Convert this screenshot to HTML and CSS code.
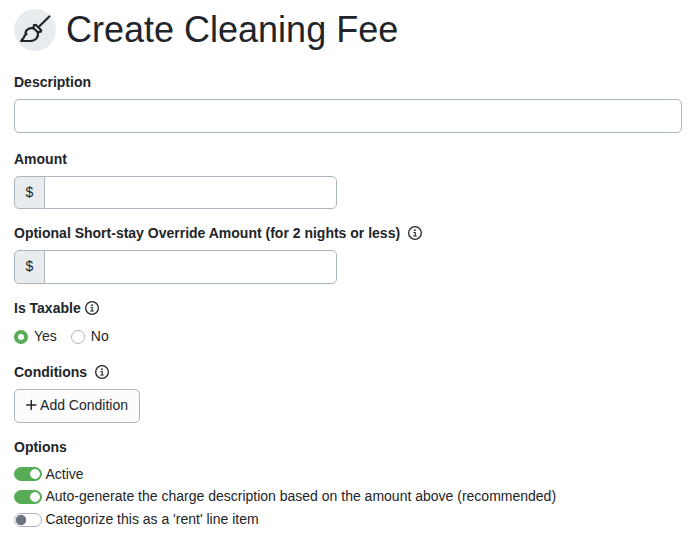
FILE: index.html
```html
<!DOCTYPE html>
<html lang="en">
<head>
    <meta charset="UTF-8">
    <meta name="viewport" content="width=device-width, initial-scale=1.0">
    <title>Create Cleaning Fee</title>
    <link rel="stylesheet" href="styles.css">
</head>
<body>
    <!-- Shared info icon -->
    <svg class="sprite" width="0" height="0">
        <symbol id="info" viewBox="0 0 14 14">
            <circle cx="7" cy="7" r="6.35" fill="none" stroke="currentColor" stroke-width="1.3"/>
            <circle cx="7" cy="4.2" r="0.9" fill="currentColor"/>
            <path d="M5.5 6.5H7.2V9.9M5.2 10H8.8" fill="none" stroke="currentColor" stroke-width="1.1"/>
        </symbol>
    </svg>

    <form class="container">
        <header class="header">
            <span class="header-icon">
                <svg viewBox="0 0 42 42" width="42" height="42" fill="none" stroke="currentColor" stroke-width="2.2" stroke-linecap="round" stroke-linejoin="round">
                    <path d="M35.3 7.5L25.6 17"/>
                    <path d="M20 16L22 15.9L27.2 21.2L26.8 22.6L23.8 23.2L19.4 19Z"/>
                    <path d="M19.4 19.4C15.8 18.6 12 20.4 11.4 23.6L12.6 25L10.8 26.2C10.6 28.8 8.6 29.6 7.2 32H16.2C21.6 32 25 28 23.8 23.2"/>
                </svg>
            </span>
            <h1>Create Cleaning Fee</h1>
        </header>

        <div class="field">
            <label class="title" for="description">Description</label>
            <input class="input" type="text" id="description">
        </div>

        <div class="field amount">
            <label class="title" for="amount">Amount</label>
            <div class="input-group">
                <span class="prefix">$</span>
                <input class="input" type="text" id="amount">
            </div>
        </div>

        <div class="field override">
            <label class="title" for="override">Optional Short-stay Override Amount (for 2 nights or less) <svg class="info wide"><use href="#info"/></svg></label>
            <div class="input-group">
                <span class="prefix">$</span>
                <input class="input" type="text" id="override">
            </div>
        </div>

        <div class="field taxable">
            <div class="title">Is Taxable <svg class="info"><use href="#info"/></svg></div>
            <div class="radios">
                <label><input type="radio" name="taxable" checked>Yes</label>
                <label><input type="radio" name="taxable">No</label>
            </div>
        </div>

        <div class="field conditions">
            <div class="title">Conditions <svg class="info wide"><use href="#info"/></svg></div>
            <button type="button" class="btn">
                <svg viewBox="0 0 12 12" width="12" height="12"><path d="M6 0.8V11.2M0.8 6H11.2" stroke="currentColor" stroke-width="1.6" stroke-linecap="round"/></svg>
                <span>Add Condition</span>
            </button>
        </div>

        <div class="field options">
            <div class="title">Options</div>
            <label class="switch active"><input type="checkbox" checked><span>Active</span></label>
            <label class="switch"><input type="checkbox" checked><span>Auto-generate the charge description based on the amount above (recommended)</span></label>
            <label class="switch"><input type="checkbox"><span>Categorize this as a 'rent' line item</span></label>
        </div>
    </form>
</body>
</html>
```

FILE: styles.css
```css
* {
    margin: 0;
    padding: 0;
    box-sizing: border-box;
}

body {
    background-color: #fff;
    color: #212529;
    font-family: "Liberation Sans", Arial, sans-serif;
    font-size: 14px;
    line-height: 21px;
}

.sprite {
    position: absolute;
}

.container {
    padding: 9px 14px 0;
}

.header {
    display: flex;
    align-items: center;
    gap: 10px;
    height: 42px;
    margin-bottom: 21px;
}

.header h1 {
    font-size: 36px;
    font-weight: 400;
    line-height: 42px;
}

.header-icon {
    width: 42px;
    height: 42px;
    border-radius: 50%;
    background-color: #e9ecef;
}

.header-icon svg {
    display: block;
}

.field {
    margin-bottom: 16px;
}

.amount,
.override,
.conditions {
    margin-bottom: 14px;
}

.taxable {
    margin-bottom: 15px;
}

.title {
    display: flex;
    align-items: center;
    height: 21px;
    margin-bottom: 6px;
    font-weight: bold;
}

.taxable .title {
    margin-bottom: 7px;
}

.options .title {
    margin-bottom: 5px;
}

.info {
    width: 14px;
    height: 14px;
    margin-left: 4px;
    margin-bottom: 1px;
}

.info.wide {
    margin-left: 8px;
}

.input {
    display: block;
    width: 100%;
    height: 34px;
    padding: 0 10px;
    border: 1px solid #adb5bd;
    border-radius: 5px;
    background-color: #fff;
    font: inherit;
    color: inherit;
}

.input-group {
    display: flex;
    width: 323px;
    height: 33px;
}

.input-group .input {
    flex: 1;
    height: 100%;
    border-radius: 0 5px 5px 0;
}

.prefix {
    display: flex;
    align-items: center;
    justify-content: center;
    width: 31px;
    margin-right: -1px;
    padding-bottom: 1px;
    border: 1px solid #adb5bd;
    border-radius: 5px 0 0 5px;
    background-color: #e9ecef;
}

.override .input-group {
    height: 34px;
}

.radios {
    display: flex;
    gap: 14px;
}

.radios label {
    display: flex;
    align-items: center;
}

.radios input {
    appearance: none;
    width: 14px;
    height: 14px;
    margin-right: 6px;
    border: 1px solid #adb5bd;
    border-radius: 50%;
}

.radios input:checked {
    border: 4px solid #56ad56;
}

.btn {
    display: flex;
    align-items: center;
    gap: 3.5px;
    width: 126px;
    height: 34px;
    padding: 0 11px 2px;
    border: 1px solid #adb5bd;
    border-radius: 5px;
    background-color: #fcfcfc;
    color: #212529;
    font: inherit;
    white-space: nowrap;
}

.switch {
    display: flex;
    align-items: center;
    height: 21px;
    margin-bottom: 2px;
}

.switch.active span {
    padding-top: 2px;
}

.switch input {
    appearance: none;
    width: 28px;
    height: 14px;
    margin-right: 3.5px;
    border: 1px solid #adb5bd;
    border-radius: 7px;
    background: radial-gradient(circle at 6px 6px, #6c757d 4.8px, transparent 5.4px);
}

.switch input:checked {
    border-color: #56ad56;
    background: radial-gradient(circle at 20px 6px, #fff 4.5px, #56ad56 5.2px);
}
```
